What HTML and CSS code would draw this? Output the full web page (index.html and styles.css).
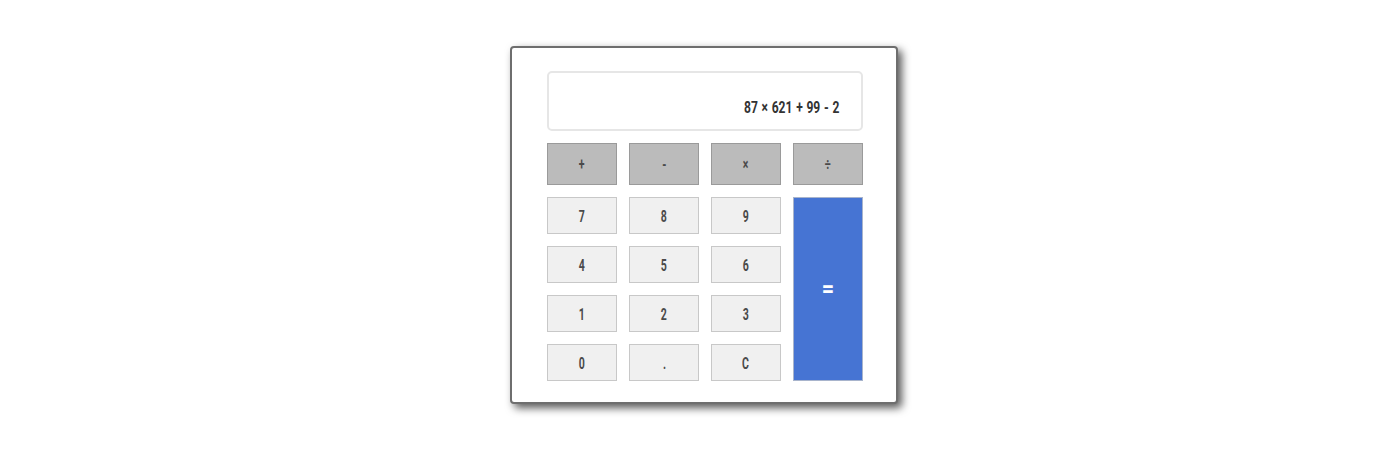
FILE: index.html
```html
<!DOCTYPE html>
<html>
<head>
<meta charset="utf-8">
<link rel="stylesheet" href="styles.css">
</head>
<body>
<div class="page">
  <div class="calc">
    <div class="display"><span class="txt">87 × 621 + 99 - 2</span></div>
    <div class="ops">
      <button class="btn op"><span class="txt">+</span></button>
      <button class="btn op"><span class="txt">-</span></button>
      <button class="btn op"><span class="txt">×</span></button>
      <button class="btn op"><span class="txt">÷</span></button>
    </div>
    <div class="keys">
      <button class="btn num"><span class="txt">7</span></button>
      <button class="btn num"><span class="txt">8</span></button>
      <button class="btn num"><span class="txt">9</span></button>
      <button class="btn eq"><span class="txt">=</span></button>
      <button class="btn num"><span class="txt">4</span></button>
      <button class="btn num"><span class="txt">5</span></button>
      <button class="btn num"><span class="txt">6</span></button>
      <button class="btn num"><span class="txt">1</span></button>
      <button class="btn num"><span class="txt">2</span></button>
      <button class="btn num"><span class="txt">3</span></button>
      <button class="btn num"><span class="txt">0</span></button>
      <button class="btn num"><span class="txt">.</span></button>
      <button class="btn num"><span class="txt">C</span></button>
    </div>
  </div>
</div>
</body>
</html>
```

FILE: styles.css
```css
html, body {
  margin: 0;
  padding: 0;
  background: #ffffff;
}
.page {
  width: 1400px;
  height: 460px;
  display: flex;
  justify-content: center;
  align-items: flex-start;
  padding-top: 46px;
  box-sizing: border-box;
  font-family: Roboto, "Liberation Sans", sans-serif;
}
.calc {
  box-sizing: border-box;
  width: 388px;
  height: 358px;
  margin-left: 8px;
  border: 2px solid #6e6e6e;
  border-radius: 4px;
  background: #fff;
  box-shadow: 4px 4px 8px rgba(0,0,0,0.65);
  padding: 23px 33px 0 35px;
  display: flex;
  flex-direction: column;
}
.txt {
  display: inline-block;
  transform: scaleX(0.62);
}
.display {
  box-sizing: border-box;
  height: 60px;
  border: 2px solid #e6e6e6;
  border-radius: 5px;
  display: flex;
  align-items: center;
  justify-content: flex-end;
  padding: 11px 0 0 0;
  font-size: 17px;
  font-weight: bold;
  color: #333;
  word-spacing: 1px;
}
.display .txt {
  transform: scaleX(0.71);
  transform-origin: right center;
  margin-right: 22px;
  white-space: nowrap;
}
.ops {
  margin-top: 12px;
  display: grid;
  grid-template-columns: repeat(4, 70px);
  column-gap: 12px;
}
.keys {
  margin-top: 12px;
  display: grid;
  grid-template-columns: repeat(4, 70px);
  grid-auto-rows: 37px;
  column-gap: 12px;
  row-gap: 12px;
}
.btn {
  box-sizing: border-box;
  margin: 0;
  padding: 0;
  font-family: inherit;
  font-weight: bold;
  font-size: 17px;
  border-radius: 0;
  display: flex;
  align-items: center;
  justify-content: center;
}
.op {
  height: 42px;
  background: #bbbbbb;
  border: 1px solid #9a9a9a;
  color: #4a4a4a;
}
.num {
  background: #f0f0f0;
  border: 1px solid #c8c8c8;
  color: #4a4a4a;
}
.eq {
  grid-column: 4;
  grid-row: 1 / span 4;
  background: #4674d3;
  border: 1px solid #a8b4cc;
  color: #fff;
  font-size: 24px;
}
.eq .txt {
  transform: scaleX(0.9);
}
```
